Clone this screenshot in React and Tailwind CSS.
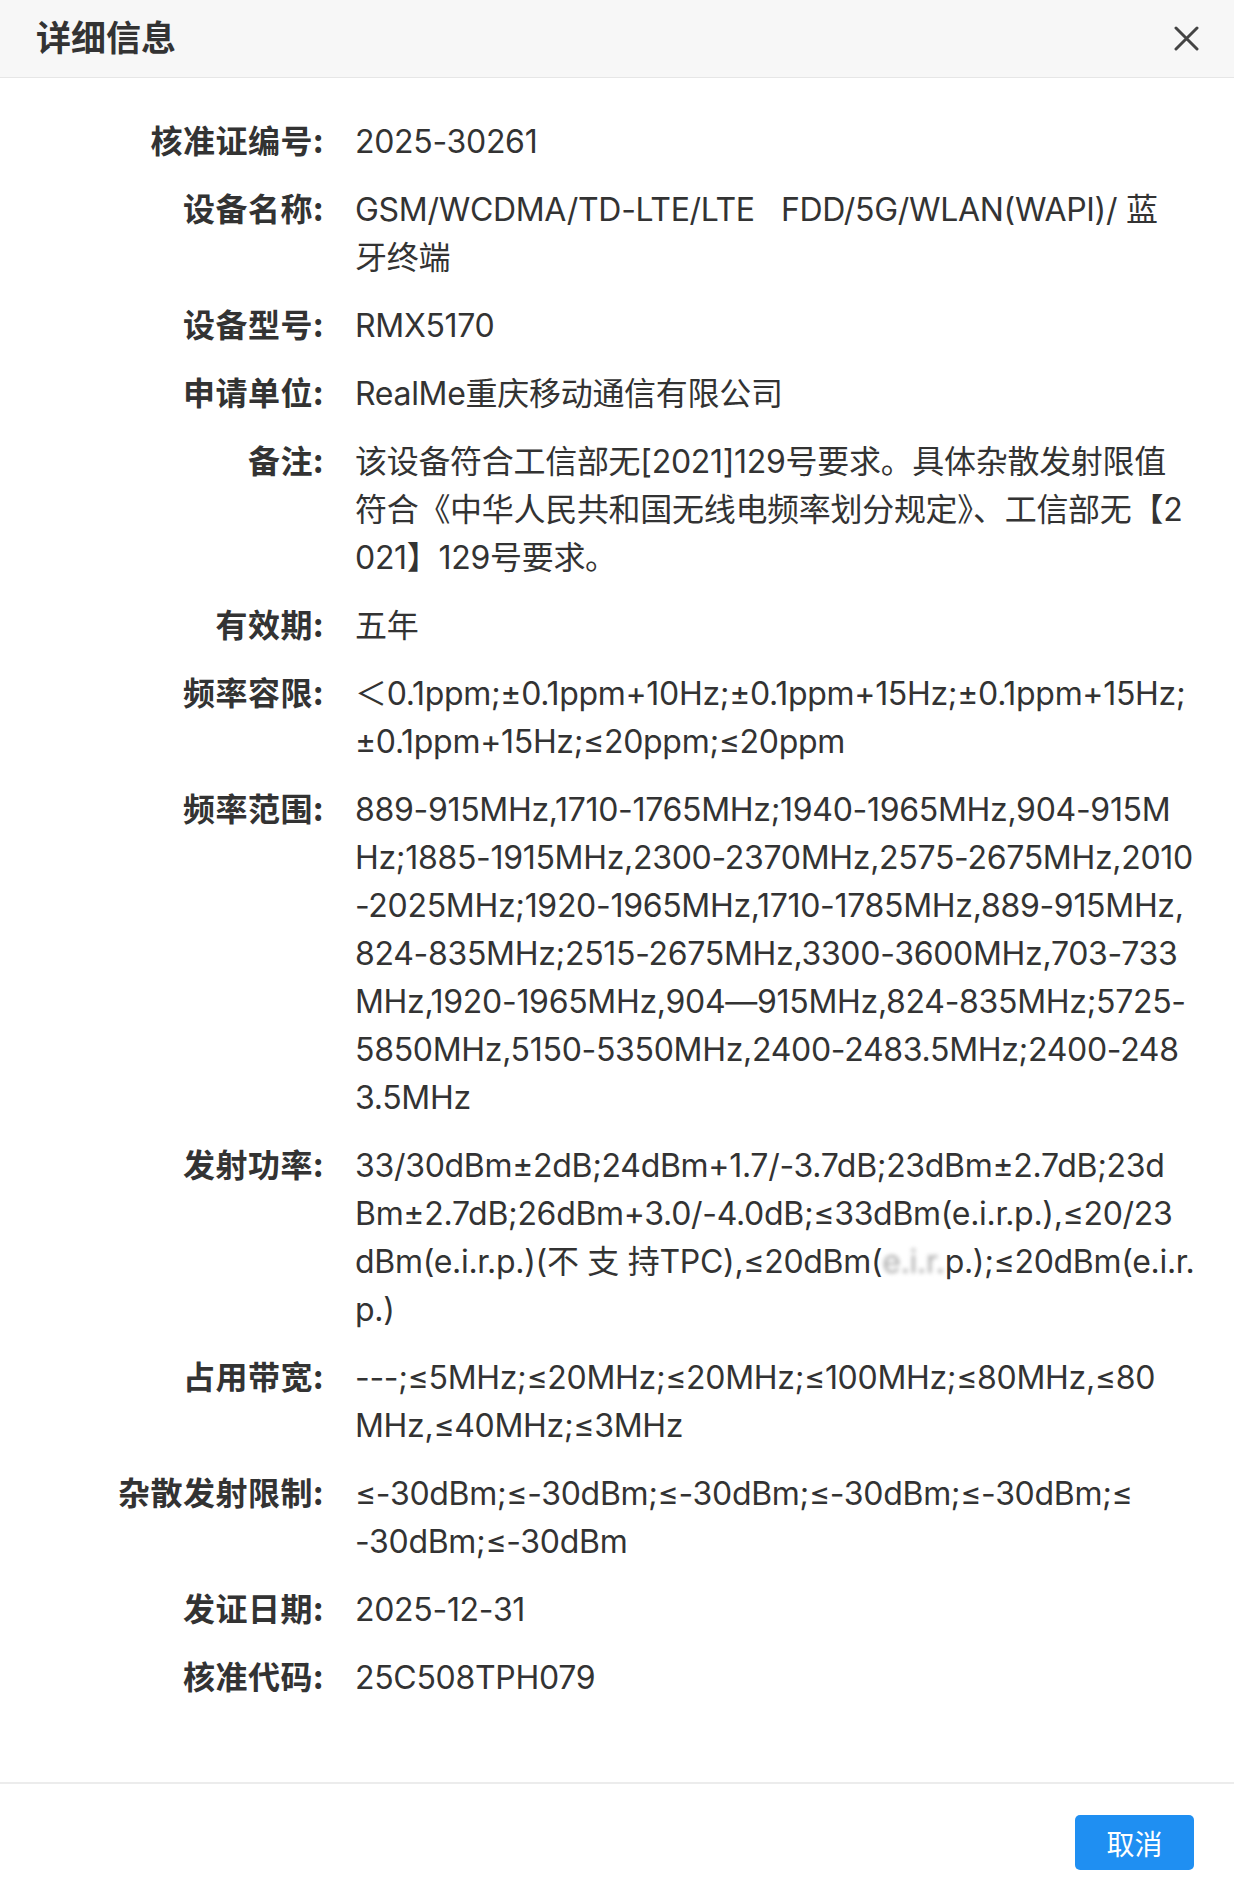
const rows = [
  { label: '核准证编号', lines: ['2025-30261'] },
  { label: '设备名称', lines: ['GSM/WCDMA/TD-LTE/LTE   FDD/5G/WLAN(WAPI)/ 蓝', '牙终端'] },
  { label: '设备型号', lines: ['RMX5170'] },
  { label: '申请单位', lines: ['RealMe重庆移动通信有限公司'] },
  {
    label: '备注',
    lines: ['该设备符合工信部无[2021]129号要求。具体杂散发射限值', '符合《中华人民共和国无线电频率划分规定》、工信部无【2', '021】129号要求。'],
  },
  { label: '有效期', lines: ['五年'] },
  { label: '频率容限', lines: ['＜0.1ppm;±0.1ppm+10Hz;±0.1ppm+15Hz;±0.1ppm+15Hz;', '±0.1ppm+15Hz;≤20ppm;≤20ppm'] },
  {
    label: '频率范围',
    lines: [
      '889-915MHz,1710-1765MHz;1940-1965MHz,904-915M',
      'Hz;1885-1915MHz,2300-2370MHz,2575-2675MHz,2010',
      '-2025MHz;1920-1965MHz,1710-1785MHz,889-915MHz,',
      '824-835MHz;2515-2675MHz,3300-3600MHz,703-733',
      'MHz,1920-1965MHz,904—915MHz,824-835MHz;5725-',
      '5850MHz,5150-5350MHz,2400-2483.5MHz;2400-248',
      '3.5MHz',
    ],
  },
  {
    label: '发射功率',
    lines: [
      '33/30dBm±2dB;24dBm+1.7/-3.7dB;23dBm±2.7dB;23d',
      'Bm±2.7dB;26dBm+3.0/-4.0dB;≤33dBm(e.i.r.p.),≤20/23',
      'blur',
      'p.)',
    ],
  },
  { label: '占用带宽', lines: ['---;≤5MHz;≤20MHz;≤20MHz;≤100MHz;≤80MHz,≤80', 'MHz,≤40MHz;≤3MHz'] },
  { label: '杂散发射限制', lines: ['≤-30dBm;≤-30dBm;≤-30dBm;≤-30dBm;≤-30dBm;≤', '-30dBm;≤-30dBm'] },
  { label: '发证日期', lines: ['2025-12-31'] },
  { label: '核准代码', lines: ['25C508TPH079'] },
];

const cjk = { fontFamily: '"Noto Sans CJK SC", sans-serif' };

const BlurLine = () => (
  <div className="whitespace-pre">
    dBm(e.i.r.p.)(不 支 持TPC),≤20dBm(<span className="inline-block blur-[2px] text-[#aaa]">e.i.r.</span>p.);≤20dBm(e.i.r.
  </div>
);

const App = () => {
  return (
    <div className="w-[1234px] min-h-[1888px] bg-white text-[#333]" style={{ fontFamily: 'Inter, "Noto Sans CJK SC", sans-serif' }}>
      <div className="h-[78px] bg-[#f7f7f7] border-b border-[#e6e6e6] flex items-center justify-between pl-[36px] pr-[35px]">
        <h2 className="text-[35px] font-bold text-[#333] -mt-[4px]" style={cjk}>详细信息</h2>
        <svg width="25" height="25" viewBox="0 0 25 25" className="text-[#444]">
          <path d="M2 2L23 23M23 2L2 23" stroke="currentColor" strokeWidth="3" strokeLinecap="round" />
        </svg>
      </div>

      <div className="pt-[40px] pb-[80px] flex flex-col gap-[20px] text-[32px] leading-[48px]">
        {rows.map((r) => (
          <div key={r.label} className="flex">
            <div className="w-[324px] shrink-0 text-right font-bold tracking-[0.5px] text-[#333] -mt-[3px]" style={cjk}>
              {r.label}:
            </div>
            <div className="ml-[31px] w-[860px] tracking-[-0.3px] text-[#333]">
              {r.lines.map((l, i) =>
                l === 'blur' ? <BlurLine key={i} /> : <div key={i} className="whitespace-pre">{l}</div>
              )}
            </div>
          </div>
        ))}
      </div>

      <div className="border-t-2 border-[#ececec] flex justify-end pt-[31px] pr-[40px]">
        <button className="w-[119px] h-[55px] bg-[#1f8ff2] rounded-[5px] text-white text-[28px] flex items-center justify-center" style={cjk}>
          取消
        </button>
      </div>
    </div>
  );
};

export default App;
